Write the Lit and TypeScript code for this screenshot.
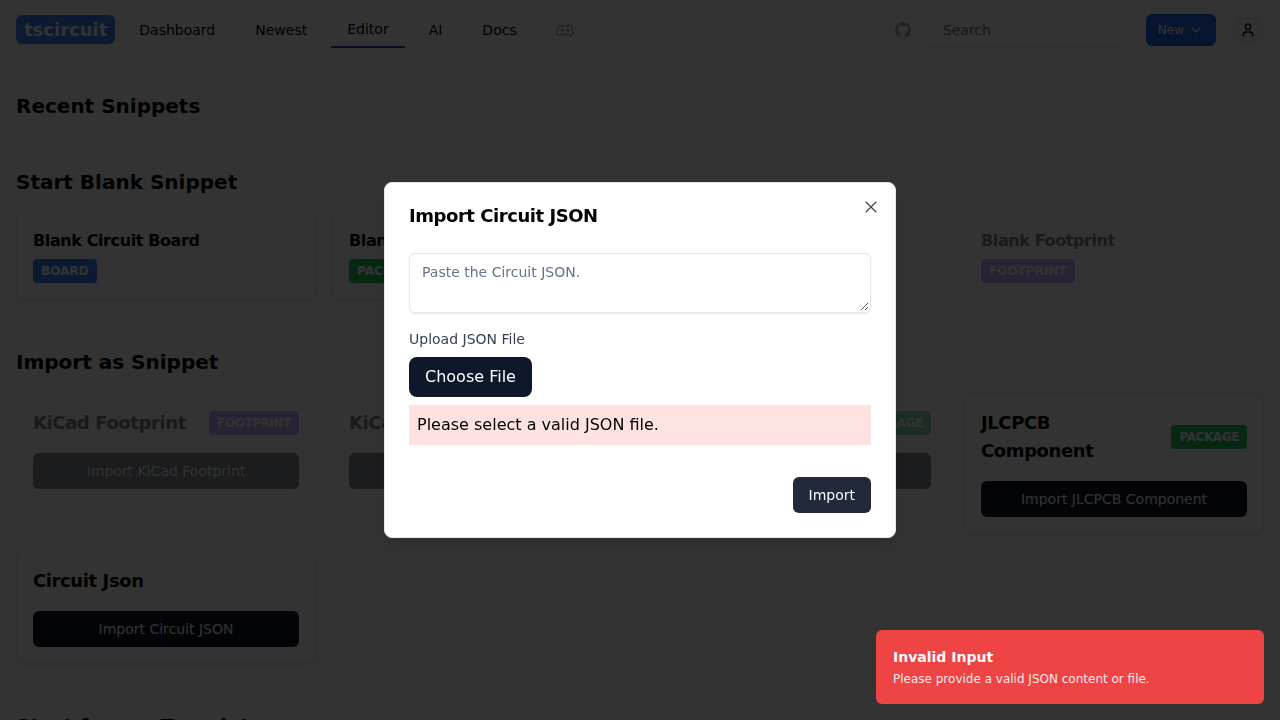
import { LitElement, html, css, svg } from 'lit';
import { customElement } from 'lit/decorators.js';

type Card = {
  title: string;
  badge: string;
  kind: string;
  faded?: boolean;
  action?: string;
};

const blankCards: Card[] = [
  { title: 'Blank Circuit Board', badge: 'BOARD', kind: 'board' },
  { title: 'Blank Circuit Module', badge: 'PACKAGE', kind: 'package' },
  { title: 'Blank 3D Model', badge: 'MODEL', kind: 'model', faded: true },
  { title: 'Blank Footprint', badge: 'FOOTPRINT', kind: 'footprint', faded: true },
];

const importCards: Card[] = [
  { title: 'KiCad Footprint', badge: 'FOOTPRINT', kind: 'footprint', faded: true, action: 'Import KiCad Footprint' },
  { title: 'KiCad Module', badge: 'PACKAGE', kind: 'package', faded: true, action: 'Import KiCad Module' },
  { title: 'KiCad Project', badge: 'PACKAGE', kind: 'package', faded: true, action: 'Import KiCad Project' },
  { title: 'JLCPCB Component', badge: 'PACKAGE', kind: 'package', action: 'Import JLCPCB Component' },
  { title: 'Circuit Json', badge: '', kind: '', action: 'Import Circuit JSON' },
];

const githubIcon = svg`<path d="M8 0C3.58 0 0 3.58 0 8c0 3.54 2.29 6.53 5.47 7.59.4.07.55-.17.55-.38 0-.19-.01-.82-.01-1.49-2.01.37-2.53-.49-2.69-.94-.09-.23-.48-.94-.82-1.13-.28-.15-.68-.52-.01-.53.63-.01 1.08.58 1.23.82.72 1.21 1.87.87 2.33.66.07-.52.28-.87.51-1.07-1.78-.2-3.64-.89-3.64-3.95 0-.87.31-1.59.82-2.15-.08-.2-.36-1.02.08-2.12 0 0 .67-.21 2.2.82.64-.18 1.32-.27 2-.27.68 0 1.36.09 2 .27 1.53-1.04 2.2-.82 2.2-.82.44 1.1.16 1.92.08 2.12.51.56.82 1.27.82 2.15 0 3.07-1.87 3.75-3.65 3.95.29.25.54.73.54 1.48 0 1.07-.01 1.93-.01 2.2 0 .21.15.46.55.38A8.013 8.013 0 0016 8c0-4.42-3.58-8-8-8z"/>`;

@customElement('app-root')
export class AppRoot extends LitElement {
  static styles = css`
    :host {
      display: block;
      height: 100vh;
      overflow: hidden;
      background: #fff;
      color: #000;
      font-family: 'DejaVu Sans', sans-serif;
    }
    * { box-sizing: border-box; }

    header {
      display: flex;
      align-items: center;
      height: 60px;
      padding: 0 16px;
    }
    .logo {
      background: #3b82f6;
      color: #fff;
      font-size: 18px;
      font-weight: 700;
      line-height: 29px;
      height: 29px;
      margin-bottom: 2px;
      padding: 0 8px;
      border-radius: 6px;
    }
    nav {
      display: flex;
      align-items: center;
      margin-left: 8px;
      gap: 8px;
      font-size: 14px;
    }
    nav a {
      display: block;
      padding: 0 16px;
      line-height: 20px;
    }
    nav a.active {
      height: 36px;
      line-height: 34px;
      margin-top: -1px;
      border-bottom: 2px solid #1e40af;
    }
    nav .discord {
      display: block;
      margin-left: 15px;
      color: #9ca3af;
    }
    .right {
      display: flex;
      align-items: center;
      margin-left: auto;
    }
    .github {
      display: block;
      color: #9ca3af;
      margin-right: 15px;
    }
    .search {
      width: 204px;
      height: 36px;
      padding: 0 16px;
      border: 1px solid #e2e8f0;
      border-radius: 6px;
      font-size: 14px;
      line-height: 34px;
      color: #64748b;
    }
    .new {
      display: flex;
      align-items: center;
      gap: 4px;
      height: 32px;
      margin-left: 16px;
      padding: 0 12px;
      border-radius: 6px;
      background: #2563eb;
      color: #f8fafc;
      font-size: 12px;
    }
    .user {
      display: flex;
      align-items: center;
      justify-content: center;
      width: 32px;
      height: 32px;
      margin-left: 16px;
      border-radius: 50%;
      background: #f1f5f9;
    }

    main { padding: 32px 16px 0; }
    section { margin-bottom: 48px; }
    h2 {
      margin: 0;
      font-size: 20px;
      line-height: 28px;
      font-weight: 700;
    }
    .grid {
      display: grid;
      grid-template-columns: repeat(4, 1fr);
      gap: 16px;
      margin-top: 16px;
    }
    .card {
      padding: 16px;
      background: #fff;
      border: 1px solid #e2e8f0;
      border-radius: 8px;
      box-shadow: 0 1px 3px rgba(0, 0, 0, 0.1);
    }
    .card.faded { opacity: 0.5; }
    .blank-title {
      font-size: 16px;
      line-height: 24px;
      font-weight: 700;
      letter-spacing: -0.025em;
    }
    .badge {
      display: inline-block;
      height: 24px;
      padding: 0 8px;
      border-radius: 4px;
      color: #fff;
      font-size: 12px;
      font-weight: 700;
      line-height: 24px;
      white-space: nowrap;
    }
    .board { background: #3b82f6; }
    .package { background: #22c55e; }
    .footprint { background: #a855f7; }
    .model { background: #f97316; }
    .blank .badge { margin-top: 6px; display: block; width: fit-content; }
    .head {
      display: flex;
      align-items: center;
      justify-content: space-between;
      gap: 8px;
      letter-spacing: -0.025em;
    }
    .head-title {
      font-size: 18px;
      line-height: 28px;
      font-weight: 700;
    }
    .action {
      height: 36px;
      margin-top: 16px;
      border-radius: 6px;
      background: #0f172a;
      color: #f8fafc;
      font-size: 14px;
      line-height: 36px;
      text-align: center;
    }

    .overlay {
      position: fixed;
      inset: 0;
      background: rgba(0, 0, 0, 0.8);
    }
    .modal {
      position: fixed;
      left: 384px;
      top: 182px;
      width: 512px;
      height: 356px;
      padding: 24px;
      background: #fff;
      border: 1px solid #e2e8f0;
      border-radius: 8px;
      box-shadow: 0 10px 15px rgba(0, 0, 0, 0.1);
    }
    .modal h3 {
      margin: 0;
      font-size: 18px;
      line-height: 18px;
      font-weight: 700;
      letter-spacing: -0.025em;
    }
    .close {
      position: absolute;
      right: 14px;
      top: 14px;
      display: block;
      color: #0f172a;
      opacity: 0.8;
    }
    .paste {
      position: relative;
      height: 60px;
      margin-top: 28px;
      padding: 8px 12px;
      border: 1px solid #e2e8f0;
      border-radius: 6px;
      box-shadow: 0 1px 2px rgba(60, 60, 120, 0.1);
      font-size: 14px;
      line-height: 20px;
      color: #64748b;
    }
    .grip {
      position: absolute;
      right: 1px;
      bottom: 1px;
      display: block;
      color: #4b5563;
    }
    .label {
      margin-top: 16px;
      font-size: 14px;
      line-height: 20px;
      color: #374151;
    }
    .file {
      width: fit-content;
      height: 40px;
      margin-top: 8px;
      padding: 0 16px;
      border-radius: 8px;
      background: #0f172a;
      color: #fff;
      font-size: 16px;
      line-height: 40px;
    }
    .error {
      height: 40px;
      margin-top: 8px;
      padding: 0 8px;
      background: #fee2e2;
      font-size: 16px;
      line-height: 40px;
      color: #000;
    }
    .foot {
      display: flex;
      justify-content: flex-end;
      margin-top: 32px;
    }
    .submit {
      height: 36px;
      padding: 0 16px;
      border-radius: 6px;
      background: rgba(15, 23, 42, 0.92);
      color: #f8fafc;
      font-size: 14px;
      line-height: 36px;
    }

    .toast {
      position: fixed;
      left: 876px;
      top: 630px;
      width: 388px;
      height: 74px;
      padding: 17px;
      border-radius: 6px;
      background: #ef4444;
      color: #f8fafc;
    }
    .toast-title {
      font-size: 14px;
      line-height: 20px;
      font-weight: 700;
    }
    .toast-text {
      margin-top: 2px;
      font-size: 12px;
      line-height: 20px;
      opacity: 0.9;
    }
  `;

  renderBlank(c: Card) {
    return html`
      <div class="card blank ${c.faded ? 'faded' : ''}">
        <div class="blank-title">${c.title}</div>
        <span class="badge ${c.kind}">${c.badge}</span>
      </div>
    `;
  }

  renderImport(c: Card) {
    return html`
      <div class="card ${c.faded ? 'faded' : ''}">
        <div class="head">
          <div class="head-title">${c.title}</div>
          ${c.badge ? html`<span class="badge ${c.kind}">${c.badge}</span>` : ''}
        </div>
        <div class="action">${c.action}</div>
      </div>
    `;
  }

  render() {
    return html`
      <header>
        <div class="logo">tscircuit</div>
        <nav>
          <a>Dashboard</a>
          <a>Newest</a>
          <a class="active">Editor</a>
          <a>AI</a>
          <a>Docs</a>
          <svg class="discord" width="18" height="14" viewBox="0 0 24 18" fill="none" stroke="currentColor" stroke-width="2" stroke-linecap="round" stroke-linejoin="round">
            <path d="M8 2.5C6 2.8 4.6 3.3 3.6 4 2 7 1 10.5 1.2 14c1.4 1.2 3 2 4.8 2.4l1.4-2.2c2.9.8 6.3.8 9.2 0l1.4 2.2c1.8-.4 3.4-1.2 4.8-2.4.2-3.5-.8-7-2.4-10-1-.7-2.4-1.2-4.4-1.5l-.8 1.5c-2.2-.3-4.2-.3-6.4 0z"/>
            <circle cx="8.5" cy="9.5" r="1.2"/>
            <circle cx="15.5" cy="9.5" r="1.2"/>
          </svg>
        </nav>
        <div class="right">
          <svg class="github" width="16" height="16" viewBox="0 0 16 16" fill="currentColor">${githubIcon}</svg>
          <div class="search">Search</div>
          <div class="new">
            New
            <svg width="16" height="16" viewBox="0 0 24 24" fill="none" stroke="currentColor" stroke-width="2" stroke-linecap="round" stroke-linejoin="round"><path d="m6 9 6 6 6-6"/></svg>
          </div>
          <div class="user">
            <svg width="16" height="16" viewBox="0 0 24 24" fill="none" stroke="#000" stroke-width="2" stroke-linecap="round" stroke-linejoin="round"><path d="M19 21v-2a4 4 0 0 0-4-4H9a4 4 0 0 0-4 4v2"/><circle cx="12" cy="7" r="4"/></svg>
          </div>
        </div>
      </header>

      <main>
        <section><h2>Recent Snippets</h2></section>
        <section>
          <h2>Start Blank Snippet</h2>
          <div class="grid">${blankCards.map((c) => this.renderBlank(c))}</div>
        </section>
        <section>
          <h2>Import as Snippet</h2>
          <div class="grid">${importCards.map((c) => this.renderImport(c))}</div>
        </section>
        <section><h2>Start from a Template</h2></section>
      </main>

      <div class="overlay"></div>

      <div class="modal">
        <h3>Import Circuit JSON</h3>
        <svg class="close" width="20" height="20" viewBox="0 0 24 24" fill="none" stroke="currentColor" stroke-width="1.4" stroke-linecap="round" stroke-linejoin="round"><path d="M18 6 6 18"/><path d="m6 6 12 12"/></svg>
        <div class="paste">
          Paste the Circuit JSON.
          <svg class="grip" width="9" height="9" viewBox="0 0 9 9" fill="none" stroke="currentColor" stroke-width="1"><path d="M1 8 8 1"/><path d="M5 8 8 5"/></svg>
        </div>
        <div class="label">Upload JSON File</div>
        <div class="file">Choose File</div>
        <div class="error">Please select a valid JSON file.</div>
        <div class="foot"><div class="submit">Import</div></div>
      </div>

      <div class="toast">
        <div class="toast-title">Invalid Input</div>
        <div class="toast-text">Please provide a valid JSON content or file.</div>
      </div>
    `;
  }
}
